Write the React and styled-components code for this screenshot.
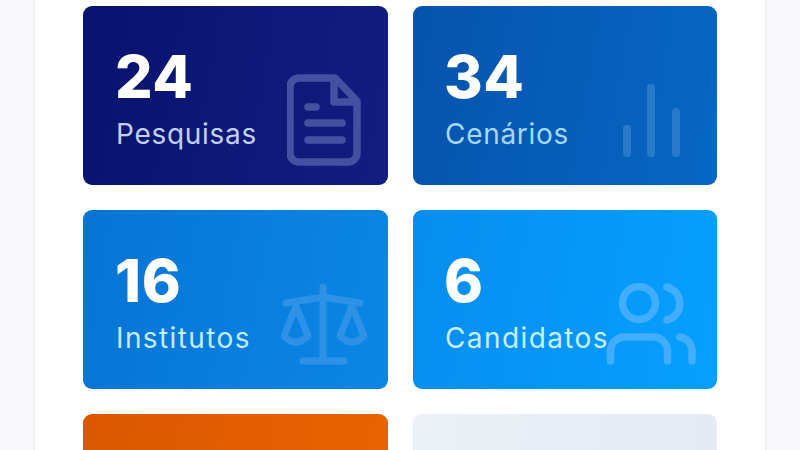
import React from "react";
import styled, { createGlobalStyle } from "styled-components";

const GlobalStyle = createGlobalStyle`
  html, body {
    margin: 0;
    height: 100%;
    overflow: hidden;
    background: #f9f9fb;
  }
`;

const Page = styled.div`
  height: 450px;
  overflow: hidden;
  font-family: "Inter", "Liberation Sans", sans-serif;
`;

const Panel = styled.main`
  box-sizing: border-box;
  width: 734px;
  height: 450px;
  margin-left: 33px;
  padding: 6px 48px 0;
  background: #ffffff;
  border-left: 2px solid #efeff1;
  border-right: 2px solid #eeeff3;
  display: grid;
  grid-template-columns: 305px 304px;
  grid-auto-rows: 179px;
  column-gap: 25px;
  row-gap: 25px;
`;

const Card = styled.section`
  position: relative;
  box-sizing: border-box;
  padding: 36px 0 0 ${({ $inset }) => $inset}px;
  border-radius: 9px;
  background: linear-gradient(100deg, ${({ $from }) => $from}, ${({ $to }) => $to});
  overflow: hidden;
`;

const Value = styled.div`
  font-size: 59px;
  line-height: 70px;
  font-weight: 800;
  letter-spacing: 0.6px;
  color: #ffffff;
`;

const Label = styled.div`
  margin: 4px 0 0 1px;
  font-size: 28px;
  line-height: 36px;
  font-weight: 400;
  letter-spacing: ${({ $track }) => $track}px;
  color: ${({ $color }) => $color};
`;

const Glyph = styled.svg`
  position: absolute;
  right: ${({ $right }) => $right}px;
  top: ${({ $top }) => $top}px;
  width: ${({ $w }) => $w}px;
  height: ${({ $h }) => $h}px;
  fill: none;
  stroke: ${({ $color }) => $color};
  stroke-linecap: round;
  stroke-linejoin: round;
`;

const DocIcon = ({ color }) => (
  <Glyph $right={27} $top={68} $w={74} $h={92} $color={color} viewBox="0 0 74 92" strokeWidth="7.5">
    <path d="M12 4h36l22 23v52a9 9 0 0 1-9 9H12a9 9 0 0 1-9-9V13a9 9 0 0 1 9-9z" />
    <path d="M47 6v22h21" />
    <path d="M21 33h8M21 49h34M21 66h34" />
  </Glyph>
);

const BarsIcon = ({ color }) => (
  <Glyph $right={37} $top={78} $w={58} $h={74} $color={color} viewBox="0 0 58 74" strokeWidth="8">
    <path d="M5 45v24M29 4v65M54 28v41" />
  </Glyph>
);

const ScaleIcon = ({ color }) => (
  <Glyph $right={19} $top={74} $w={90} $h={82} $color={color} viewBox="0 0 90 82" strokeWidth="7">
    <path d="M44 3v74M24 77h41M7 19l37-6 37 6" />
    <path d="M17 22L5 52Q17 64 29 52zM73 22L61 52Q73 64 85 52z" />
  </Glyph>
);

const UsersIcon = ({ color }) => (
  <Glyph $right={20} $top={73} $w={92} $h={84} $color={color} viewBox="0 0 92 84" strokeWidth="7.5">
    <circle cx="34" cy="20" r="16.5" />
    <path d="M62 4a17 17 0 0 1 0 33" />
    <path d="M5.5 78V68a14 14 0 0 1 14-14h29a14 14 0 0 1 14 14v10" />
    <path d="M75 54a14 14 0 0 1 12 14v10" />
  </Glyph>
);

const stats = [
  { value: "24", label: "Pesquisas", track: 0.7, inset: 32, from: "#08136f", to: "#131d80", text: "#c3d0f5", icon: <DocIcon color="#4450a0" /> },
  { value: "34", label: "Cenários", track: 0.7, inset: 31, from: "#0653ad", to: "#0667c4", text: "#a5d8fb", icon: <BarsIcon color="#2a7acb" /> },
  { value: "16", label: "Institutos", track: 1.4, inset: 32, from: "#0774d4", to: "#0a87e6", text: "#c4ecfc", icon: <ScaleIcon color="#2d92e6" /> },
  { value: "6", label: "Candidatos", track: 1.4, inset: 31, from: "#078df0", to: "#05a0ff", text: "#c9f0ff", icon: <UsersIcon color="#42adfa" /> },
  { from: "#dc5600", to: "#ea6500" },
  { from: "#ecf0f7", to: "#e4e9f2" },
];

const App = () => (
  <>
    <GlobalStyle />
    <Page>
      <Panel>
        {stats.map((stat, i) => (
          <Card key={i} $inset={stat.inset} $from={stat.from} $to={stat.to}>
            {stat.value && <Value>{stat.value}</Value>}
            {stat.label && <Label $color={stat.text} $track={stat.track}>{stat.label}</Label>}
            {stat.icon}
          </Card>
        ))}
      </Panel>
    </Page>
  </>
);

export default App;
